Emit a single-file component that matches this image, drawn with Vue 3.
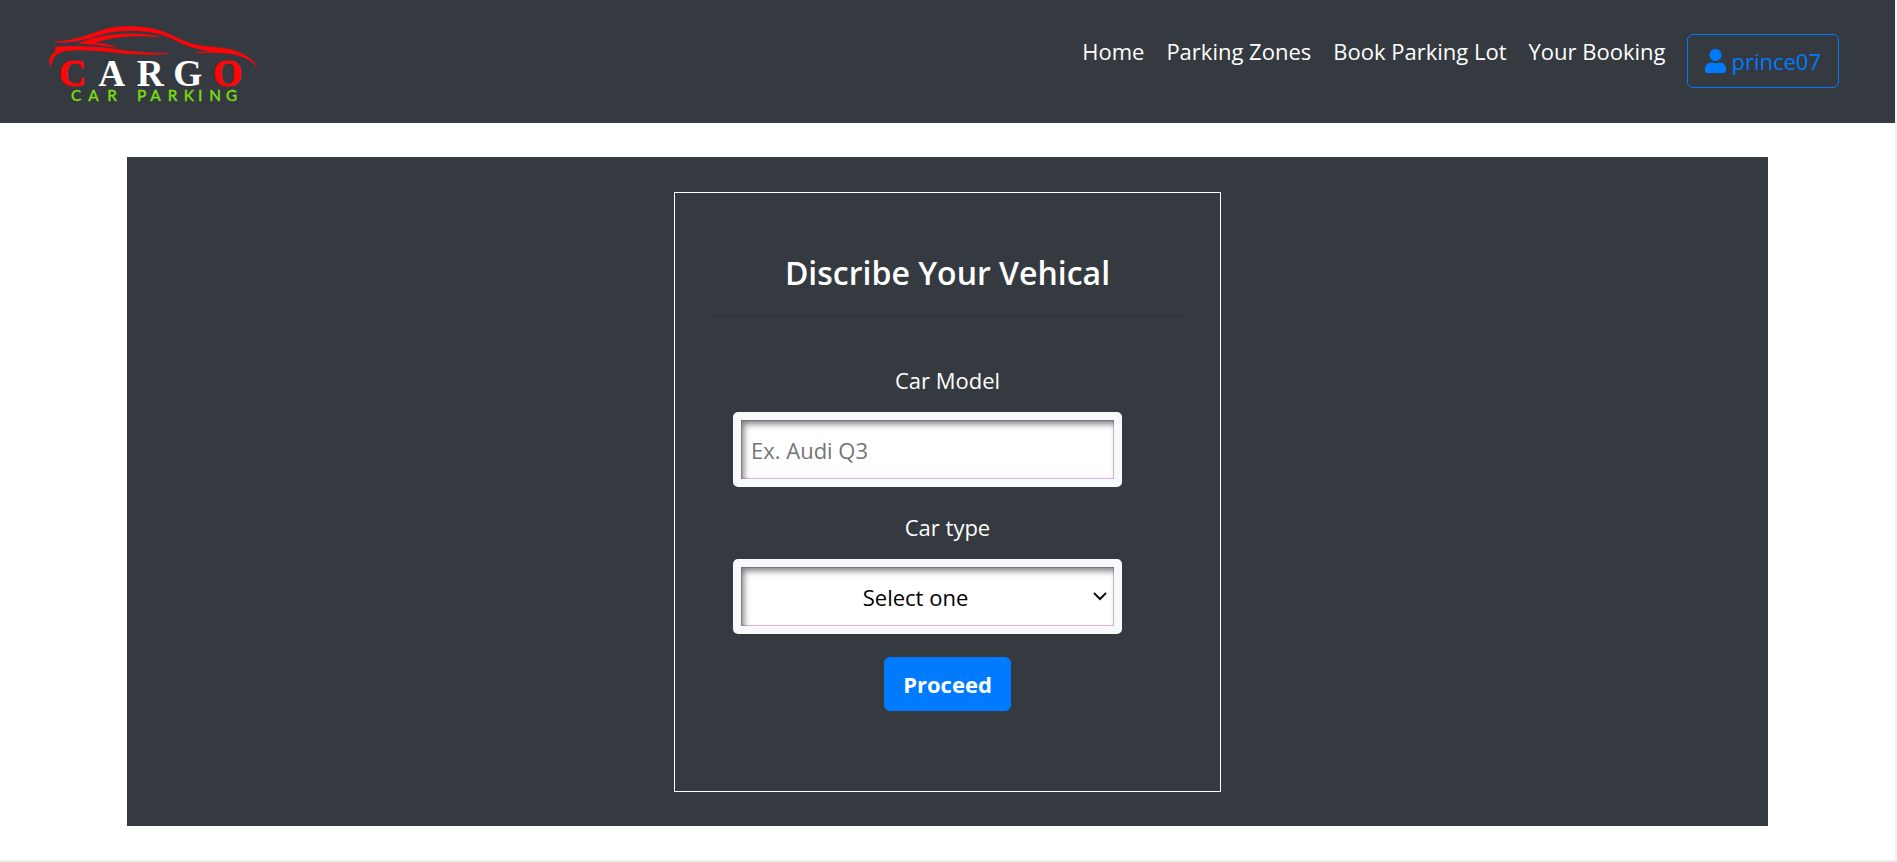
<script setup>
import { ref } from 'vue'

const links = ['Home', 'Parking Zones', 'Book Parking Lot', 'Your Booking']
const model = ref('')
const type = ref('')
</script>

<template>
  <div class="page">
    <header class="navbar">
      <a href="#" class="brand" aria-label="Cargo Car Parking">
        <svg class="logo" viewBox="0 -3 720 339">
          <g fill="#ff0508" stroke="#ff0508" stroke-width="2" stroke-linejoin="round">
            <path d="M73 92 C130 92 175 71 222 56 C265 43 335 44 383 57 C430 70 453 92 496 101 C538 110 570 108 602 116 C642 126 668 146 680 167 C658 139 625 128 590 124 C555 120 523 119 486 108 C450 99 426 78 382 67 C335 56 270 56 227 67 C180 80 130 100 73 92Z" />
            <path d="M148 97 C192 78 250 68 310 69 C345 70 370 72 386 77 C350 74 300 74 262 79 C235 83 211 89 190 95 C215 98 237 101 256 108 C219 104 184 99 148 97Z" />
            <path d="M76 108 C145 104 212 108 262 116 C314 124 362 126 414 128 C350 132 297 129 245 123 C190 117 143 115 109 119 C79 123 66 139 62 166 C55 151 60 133 76 122Z" />
            <path d="M498 125 C540 119 580 118 617 124 C643 130 663 144 674 157 C650 140 624 130 594 127 C562 124 528 124 498 125Z" />
          </g>
          <g class="logo-name">
            <text y="225" x="87 205 320 430 550"><tspan class="logo-red">C</tspan><tspan fill="#fff">ARG</tspan><tspan class="logo-red">O</tspan></text>
          </g>
          <text class="logo-sub" y="270" x="123 175 232 270 321 361 413 461 504 538 588">CAR PARKING</text>
        </svg>
      </a>
      <nav class="menu">
        <a v-for="link in links" :key="link" href="#" class="link">{{ link }}</a>
        <button type="button" class="user">
          <svg class="user-icon" viewBox="0 0 448 512"><path fill="currentColor" d="M224 256c70.700 0 128-57.300 128-128S294.700 0 224 0 96 57.300 96 128s57.300 128 128 128zm89.600 32h-16.700c-22.200 10.200-46.900 16-72.900 16s-50.600-5.800-72.900-16h-16.700C60.200 288 0 348.200 0 422.400V464c0 26.500 21.500 48 48 48h352c26.500 0 48-21.500 48-48v-41.600c0-74.200-60.200-134.400-134.400-134.400z" /></svg>
          <span>prince07</span>
        </button>
      </nav>
    </header>

    <main class="panel">
      <form class="card" @submit.prevent>
        <h1 class="title">Discribe Your Vehical</h1>
        <hr class="rule">
        <div class="fields">
          <label class="label" for="model">Car Model</label>
          <input id="model" v-model="model" class="control" type="text" placeholder="Ex. Audi Q3">
          <label class="label" for="type">Car type</label>
          <div class="select-wrap">
            <select id="type" v-model="type" class="control select">
              <option value="">Select one</option>
              <option value="suv">SUV</option>
              <option value="sedan">Sedan</option>
            </select>
            <svg class="chevron" viewBox="0 0 14 10"><path d="M1 2 L7 8 L13 2" fill="none" stroke="#111" stroke-width="2" /></svg>
          </div>
        </div>
        <button type="submit" class="proceed">Proceed</button>
      </form>
    </main>
  </div>
</template>

<style>
body {
  margin: 0;
  background: #fff;
}
</style>

<style scoped>
.page {
  box-sizing: border-box;
  min-height: 100vh;
  border-right: 2px solid #f1f1f1;
  border-bottom: 2px solid #eee;
  font-family: "Open Sans", "Noto Sans", sans-serif;
  font-size: 22px;
  line-height: 36px;
  color: #fff;
}

.page * {
  box-sizing: border-box;
}

.navbar {
  display: flex;
  justify-content: space-between;
  align-items: flex-start;
  padding: 10px 56px 0 30px;
  background: #343a40;
}

.brand,
.logo {
  display: block;
}

.logo {
  width: 240px;
  height: 113px;
}

.logo-name {
  font-family: "Liberation Serif", serif;
  font-size: 112px;
  font-weight: 700;
}

.logo-red {
  fill: #ff0508;
  stroke: #ff0508;
  stroke-width: 3px;
}

.logo-sub {
  font-family: Lato, sans-serif;
  font-size: 46px;
  font-weight: 500;
  fill: #7bdc12;
  stroke: #7bdc12;
  stroke-width: 1px;
}

.menu {
  display: flex;
  align-items: flex-start;
  gap: 22px;
  padding-top: 24px;
}

.link {
  color: #fff;
  line-height: 34px;
  text-decoration: none;
  white-space: nowrap;
}

.user {
  display: flex;
  align-items: center;
  gap: 5px;
  height: 54px;
  padding: 0 17px;
  border: 1px solid #007bff;
  border-radius: 6px;
  background: transparent;
  color: #007bff;
  font: inherit;
}

.user-icon {
  width: 21px;
  height: 24px;
}

.panel {
  display: flex;
  justify-content: center;
  margin: 34px 127px;
  padding: 35px 0 34px;
  background: #343a40;
}

.card {
  width: 33.3333%;
  min-height: 600px;
  padding: 58px 35px 80px;
  border: 1px solid #fff;
  text-align: center;
}

.title {
  margin: 0;
  font-size: 32px;
  font-weight: 600;
  line-height: 44px;
}

.rule {
  height: 1px;
  margin: 20px 0 46px;
  border: 0;
  background: #2f3439;
}

.fields {
  display: flex;
  flex-direction: column;
  padding: 0 63px 0 23px;
}

.label {
  margin: 0 -63px 14px -23px;
}

.control {
  width: 100%;
  height: 75px;
  padding: 0 10px;
  border: 8px solid #f8f9fa;
  border-radius: 5px;
  background: #fff;
  box-shadow: inset 3px 4px 6px rgba(0, 0, 0, 0.5), inset 0 0 0 1px #e2c0e4;
  color: #000;
  font: inherit;
}

input.control {
  margin-bottom: 22px;
}

.control::placeholder {
  color: #757575;
  opacity: 1;
}

.select-wrap {
  position: relative;
}

.select {
  display: block;
  padding: 0 34px 0 10px;
  appearance: none;
  text-align: center;
  text-align-last: center;
}

.chevron {
  position: absolute;
  right: 15px;
  top: 32px;
  width: 14px;
  height: 10px;
  pointer-events: none;
}

.proceed {
  height: 54px;
  margin-top: 23px;
  padding: 0 18px;
  border: 1px solid #007bff;
  border-radius: 6px;
  background: #007bff;
  color: #fff;
  font: inherit;
  font-weight: 700;
}
</style>
